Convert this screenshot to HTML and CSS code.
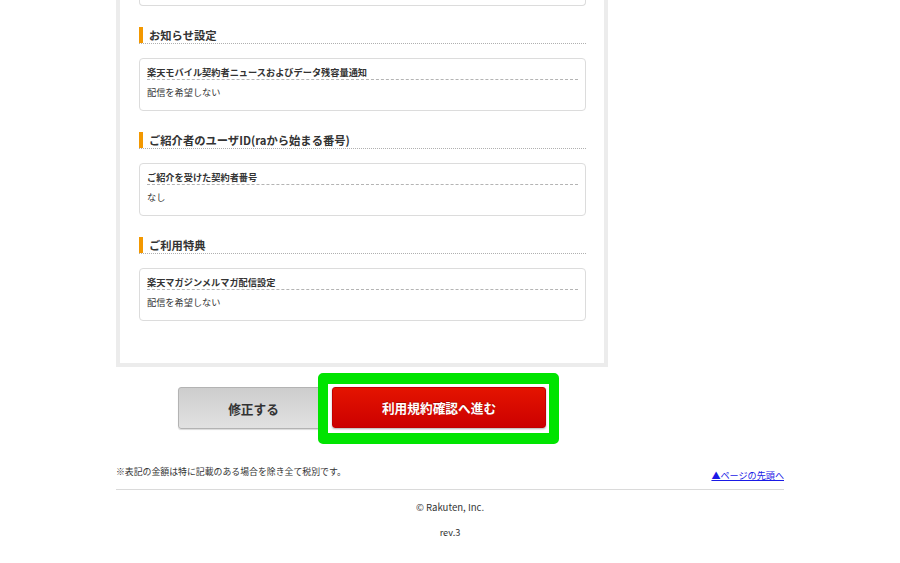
FILE: index.html
```html
<!DOCTYPE html>
<html lang="ja">
<head>
<meta charset="utf-8">
<title>確認</title>
<link rel="stylesheet" href="styles.css">
</head>
<body>
<div class="page">
  <div class="frame">
    <div class="card-tail"></div>

    <section class="sec">
      <h2 class="sec-head">お知らせ設定</h2>
      <div class="card">
        <div class="card-title">楽天モバイル契約者ニュースおよびデータ残容量通知</div>
        <div class="card-value">配信を希望しない</div>
      </div>
    </section>

    <section class="sec">
      <h2 class="sec-head">ご紹介者のユーザID(raから始まる番号)</h2>
      <div class="card">
        <div class="card-title">ご紹介を受けた契約者番号</div>
        <div class="card-value">なし</div>
      </div>
    </section>

    <section class="sec">
      <h2 class="sec-head">ご利用特典</h2>
      <div class="card">
        <div class="card-title">楽天マガジンメルマガ配信設定</div>
        <div class="card-value">配信を希望しない</div>
      </div>
    </section>
  </div>

  <div class="actions">
    <button class="btn btn-gray" type="button">修正する</button>
    <span class="highlight"><button class="btn btn-red" type="button">利用規約確認へ進む</button></span>
  </div>

  <div class="foot-row">
    <p class="note">※表記の金額は特に記載のある場合を除き全て税別です。</p>
    <a class="top-link" href="#">▲ページの先頭へ</a>
  </div>
  <p class="copy">© Rakuten, Inc.</p>
  <p class="rev">rev.3</p>
</div>
</body>
</html>
```

FILE: styles.css
```css
html, body {
  margin: 0;
  padding: 0;
  background: #fff;
}

body {
  font-family: "Noto Sans CJK JP", "Noto Sans", sans-serif;
  color: #333;
}

.page {
  width: 668px;
  margin: 0 auto;
}

.frame {
  width: 492px;
  box-sizing: border-box;
  border: 4px solid #ececec;
  border-top: 0;
  padding: 0 18px 42px 19px;
  background: #fff;
}

.card-tail {
  height: 5px;
  border: 1px solid #dcdcdc;
  border-top: 0;
  border-radius: 0 0 4px 4px;
}

.sec {
  margin-top: 21px;
}

.sec-head {
  display: flex;
  align-items: center;
  height: 16px;
  margin: 0;
  border-bottom: 1px dotted #b0b0b0;
  font-size: 11.3px;
  font-weight: bold;
  color: #333;
  line-height: 16px;
}

.sec-head::before {
  content: "";
  align-self: stretch;
  width: 4px;
  margin-right: 6px;
  background: #f39800;
}

.card {
  margin-top: 14px;
  border: 1px solid #dcdcdc;
  border-radius: 4px;
  padding: 0 7px 11px;
}

.card-title {
  padding-top: 6px;
  font-size: 9.2px;
  font-weight: bold;
  line-height: 14px;
  border-bottom: 1px dashed #b4b4b4;
  color: #333;
}

.card-value {
  padding-top: 5px;
  font-size: 9.2px;
  line-height: 14px;
  color: #333;
}

.actions {
  width: 492px;
  display: flex;
  justify-content: center;
  gap: 3px;
  margin-top: 20px;
}

.btn {
  font-family: inherit;
  font-size: 12.7px;
  font-weight: bold;
  height: 42px;
  border-radius: 3px;
  cursor: pointer;
  padding: 0;
}

.btn-gray {
  width: 151px;
  color: #333;
  border: 1px solid #b3b3b3;
  background: linear-gradient(#cdcdcd, #e1e1e1);
  box-shadow: 0 1px 1px rgba(0, 0, 0, 0.15);
}

.highlight {
  display: inline-flex;
  margin: -14px -13px -15px -14px;
  padding: 2px 3px 4px 4px;
  border: 10px solid #00e400;
  border-top-width: 11px;
  border-bottom-width: 11px;
  border-radius: 5px;
  background: #fff;
}

.btn-red {
  width: 214px;
  height: 41px;
  margin-top: 1px;
  color: #fff;
  border: 1px solid #c10000;
  background: linear-gradient(#e41400, #cc0000);
  box-shadow: 0 1px 2px rgba(0, 0, 0, 0.3);
  text-shadow: 0 -1px 0 rgba(0, 0, 0, 0.25);
}

.foot-row {
  display: flex;
  justify-content: space-between;
  align-items: flex-end;
  margin-top: 36px;
  padding-bottom: 7px;
  border-bottom: 1px solid #dadada;
}

.note {
  margin: 0 0 3px;
  font-size: 8.9px;
  line-height: 14px;
  color: #333;
}

.top-link {
  font-size: 9.1px;
  line-height: 14px;
  color: #1a1ae6;
  text-decoration: underline;
}

.copy {
  margin: 10px 0 0;
  text-align: center;
  font-size: 9.6px;
  line-height: 14px;
  color: #333;
}

.rev {
  margin: 11px 0 0;
  text-align: center;
  font-size: 9.2px;
  line-height: 14px;
  color: #333;
}
```
